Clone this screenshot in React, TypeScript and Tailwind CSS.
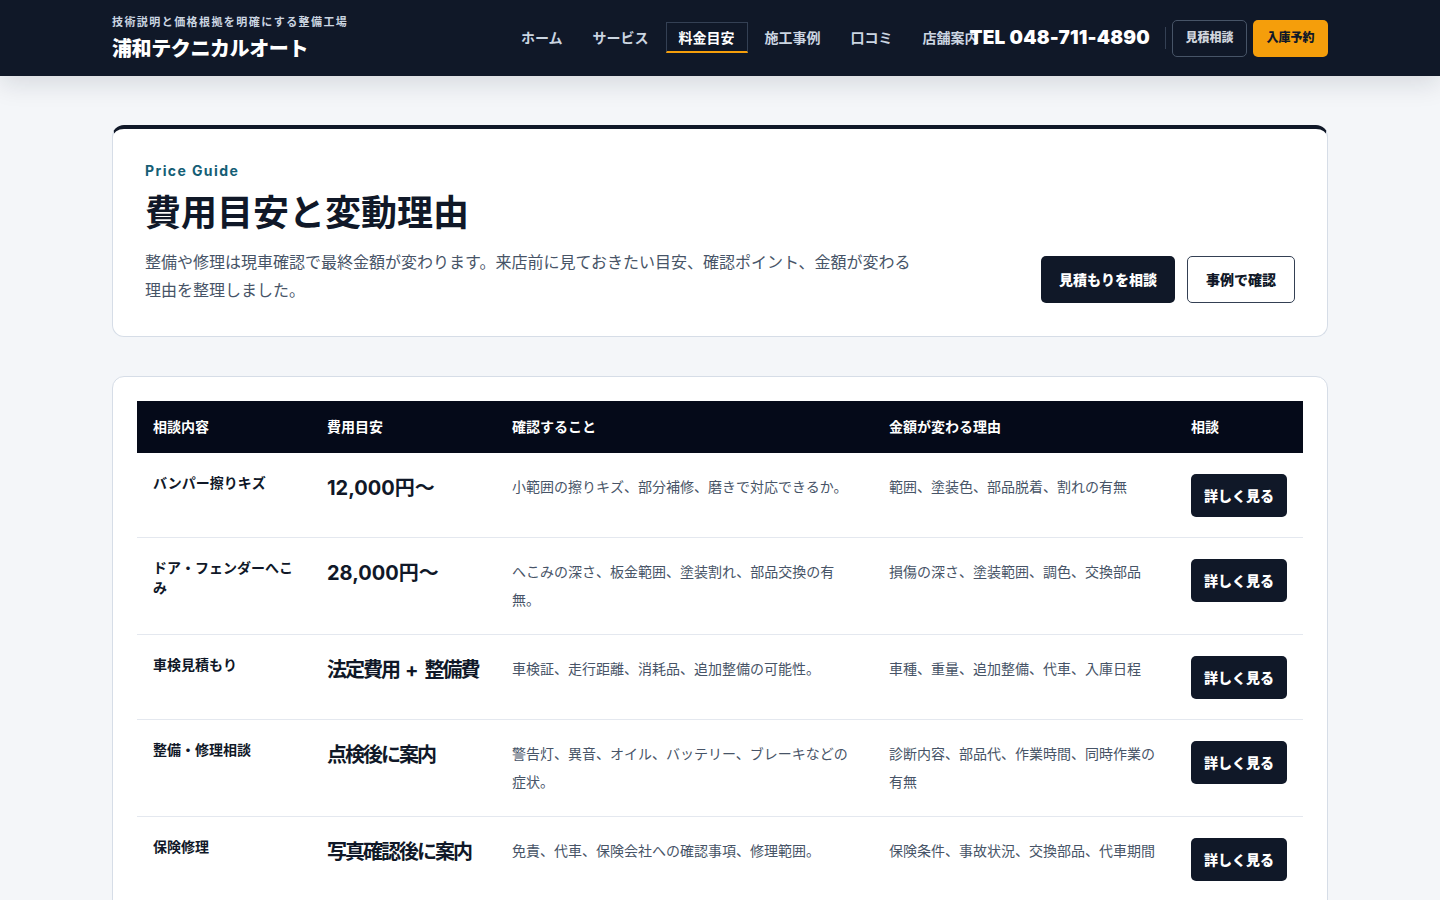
import React from "react";

const navItems = ["ホーム", "サービス", "料金目安", "施工事例", "口コミ", "店舗案内"];

const rows = [
  {
    name: "バンパー擦りキズ",
    price: ["12,000円〜"],
    check: "小範囲の擦りキズ、部分補修、磨きで対応できるか。",
    reason: "範囲、塗装色、部品脱着、割れの有無",
  },
  {
    name: "ドア・フェンダーへこみ",
    price: ["28,000円〜"],
    check: "へこみの深さ、板金範囲、塗装割れ、部品交換の有無。",
    reason: "損傷の深さ、塗装範囲、調色、交換部品",
  },
  {
    name: "車検見積もり",
    price: ["法定費用", "整備費"],
    check: "車検証、走行距離、消耗品、追加整備の可能性。",
    reason: "車種、重量、追加整備、代車、入庫日程",
  },
  {
    name: "整備・修理相談",
    price: ["点検後に案内"],
    check: "警告灯、異音、オイル、バッテリー、ブレーキなどの症状。",
    reason: "診断内容、部品代、作業時間、同時作業の有無",
  },
  {
    name: "保険修理",
    price: ["写真確認後に案内"],
    check: "免責、代車、保険会社への確認事項、修理範囲。",
    reason: "保険条件、事故状況、交換部品、代車期間",
  },
];

const cols = "grid grid-cols-[174px_185px_377px_302px_128px]";

// Kanji prices are set a little tighter than the numeric ones.
const Price = ({ parts }: { parts: string[] }) => {
  if (/^\d/.test(parts[0])) return <>{parts[0]}</>;
  return (
    <>
      {parts.map((p, i) => (
        <React.Fragment key={p}>
          {i > 0 && <span className="mx-[6px]">+</span>}
          <span className="tracking-[-0.1em]">{p}</span>
        </React.Fragment>
      ))}
    </>
  );
};

const Header = () => (
  <header className="bg-[#101828] h-[76px] shadow-[0_8px_24px_rgba(15,23,42,0.12)] relative z-10">
    <div className="w-[1216px] mx-auto h-full flex items-center justify-between">
      <div className="flex flex-col">
        <p className="text-[11px] leading-4 font-bold text-[#cbd5e1] tracking-[0.13em]">
          技術説明と価格根拠を明確にする整備工場
        </p>
        <p className="mt-[5px] text-[20px] leading-7 font-extrabold text-white tracking-[-0.02em]">
          浦和テクニカルオート
        </p>
      </div>
      <div className="flex items-center">
        <nav className="flex items-center gap-[4px] -mt-[1px]">
          {navItems.map((item) =>
            item === "料金目安" ? (
              <span
                key={item}
                className="h-[31px] flex items-center px-3 border border-[#344054] border-b-2 border-b-[#f59e0b] text-[14px] font-bold text-white whitespace-nowrap"
              >
                {item}
              </span>
            ) : (
              <span
                key={item}
                className="h-[31px] flex items-center px-3 border border-transparent text-[14px] font-bold text-[#cbd5e1] whitespace-nowrap"
              >
                {item}
              </span>
            ),
          )}
        </nav>
        <span className="relative -ml-[22px] text-[19px] font-black text-white whitespace-nowrap tracking-[0.01em]">
          TEL 048-711-4890
        </span>
        <span className="ml-[15px] w-px h-[22px] bg-[#344054]" />
        <div className="ml-[6px] flex items-center gap-[6px]">
          <button className="h-[37px] w-[75px] rounded-[5px] border border-[#475467] text-[12px] font-extrabold text-[#d0d5dd]">
            見積相談
          </button>
          <button className="h-[37px] w-[75px] rounded-[5px] bg-[#f59e0b] text-[12px] font-extrabold text-[#101828]">
            入庫予約
          </button>
        </div>
      </div>
    </div>
  </header>
);

const Hero = () => (
  <section className="bg-white border border-[#d6dde7] border-t-4 border-t-[#101828] rounded-[12px] px-8 pt-8 pb-8 flex items-end justify-between">
    <div>
      <p className="text-[14px] leading-5 font-bold text-[#155e75] tracking-[0.1em]">
        Price Guide
      </p>
      <h1 className="mt-2.5 text-[36px] leading-[45px] font-bold text-[#101828]">
        費用目安と変動理由
      </h1>
      <p className="mt-3 max-w-[776px] text-[16px] leading-7 text-[#475467]">
        整備や修理は現車確認で最終金額が変わります。来店前に見ておきたい目安、確認ポイント、金額が変わる理由を整理しました。
      </p>
    </div>
    <div className="flex items-center gap-3 mb-px">
      <button className="h-[47px] px-[18px] rounded-[5px] bg-[#101828] text-[14px] font-extrabold text-white">
        見積もりを相談
      </button>
      <button className="h-[47px] px-[18px] rounded-[5px] border border-[#344054] bg-white text-[14px] font-extrabold text-[#101828]">
        事例で確認
      </button>
    </div>
  </section>
);

const PriceTable = () => (
  <section className="mt-[39px] bg-white border border-[#d6dde7] rounded-[12px] p-6">
    <div className={`${cols} bg-[#050a19] text-white text-[14px] font-bold leading-5`}>
      {["相談内容", "費用目安", "確認すること", "金額が変わる理由", "相談"].map((h) => (
        <div key={h} className="px-4 py-4">
          {h}
        </div>
      ))}
    </div>
    {rows.map((r) => (
      <div key={r.name} className={`${cols} border-b border-[#e4e8ef]`}>
        <div className="px-4 py-5 text-[14px] leading-5 font-bold text-[#101828]">{r.name}</div>
        <div className="px-4 py-5 text-[20px] leading-[30px] font-bold text-[#101828] whitespace-nowrap">
          <Price parts={r.price} />
        </div>
        <div className="px-4 py-5 text-[14px] leading-7 text-[#475467]">{r.check}</div>
        <div className="px-4 py-5 text-[14px] leading-7 text-[#475467]">{r.reason}</div>
        <div className="px-4 pt-[21px] pb-5">
          <button className="h-[43px] w-[96px] rounded-[5px] bg-[#101828] text-[14px] font-extrabold text-white">
            詳しく見る
          </button>
        </div>
      </div>
    ))}
  </section>
);

const App = () => (
  <div className="min-h-screen bg-[#f4f6f9] font-['Inter','Noto_Sans_CJK_JP',sans-serif]">
    <Header />
    <main className="w-[1216px] mx-auto pt-[49px] pb-16">
      <Hero />
      <PriceTable />
    </main>
  </div>
);

export default App;
